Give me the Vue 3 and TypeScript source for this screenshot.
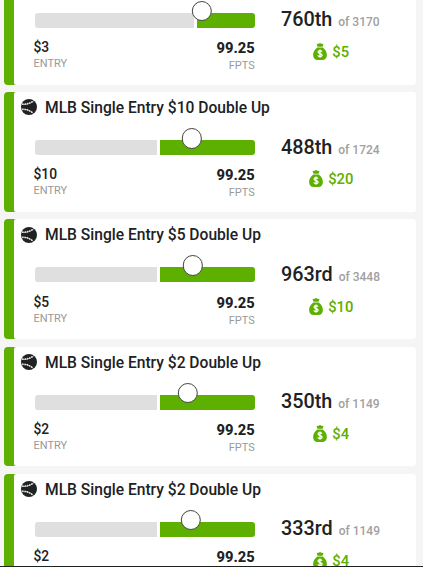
<script setup lang="ts">
interface Contest {
  title?: string
  entry: string
  points: string
  rank: string
  total: number
  prize: string
  split: number
  knob: number
}

// split and knob are pixel offsets along the 220px progress bar
const contests: Contest[] = [
  { entry: '$3', points: '99.25', rank: '760th', total: 3170, prize: '$5', split: 159.5, knob: 167.2 },
  { title: 'MLB Single Entry $10 Double Up', entry: '$10', points: '99.25', rank: '488th', total: 1724, prize: '$20', split: 122.7, knob: 157.6 },
  { title: 'MLB Single Entry $5 Double Up', entry: '$5', points: '99.25', rank: '963rd', total: 3448, prize: '$10', split: 122.7, knob: 158.6 },
  { title: 'MLB Single Entry $2 Double Up', entry: '$2', points: '99.25', rank: '350th', total: 1149, prize: '$4', split: 122.7, knob: 153 },
  { title: 'MLB Single Entry $2 Double Up', entry: '$2', points: '99.25', rank: '333rd', total: 1149, prize: '$4', split: 122.7, knob: 156.5 },
]
</script>

<template>
  <main class="screen">
    <div class="list">
      <article v-for="(c, i) in contests" :key="i" class="card">
        <div class="panel">
          <header class="head">
            <template v-if="c.title">
              <svg class="ball" viewBox="0 0 16 16">
                <circle cx="8" cy="8" r="8" fill="#202123" />
                <g fill="none" stroke="#fff">
                  <path d="M.8 5.3C5 5.8 9.5 4.7 12.8 1.8M.9 10.1c4-.1 8.5 1.2 11.5 4.3" stroke-width=".75" />
                  <path d="M1.5 5C5.5 5.3 9.5 4.2 12.2 2M1.4 10.4c4 0 8 1.2 10.4 3.8" stroke-width="1.8" stroke-dasharray=".8 1.5" />
                </g>
              </svg>
              <h2 class="title">{{ c.title }}</h2>
            </template>
          </header>
          <div class="body">
            <section class="progress">
              <div class="bar">
                <span class="below" :style="{ width: c.split + 'px' }"></span>
                <span class="above"></span>
                <span class="knob" :style="{ left: c.knob + 'px' }"></span>
              </div>
              <div class="stats">
                <div class="stat">
                  <span class="amount">{{ c.entry }}</span>
                  <span class="label">ENTRY</span>
                </div>
                <div class="stat right">
                  <span class="points">{{ c.points }}</span>
                  <span class="label low">FPTS</span>
                </div>
              </div>
            </section>
            <section class="result">
              <div class="place">
                <span class="rank">{{ c.rank }}</span>
                <span class="total">of {{ c.total }}</span>
              </div>
              <div class="prize">
                <svg class="bag" viewBox="0 0 14 17">
                  <path d="M3.6.8 5 1.1 7 .1l2 1 1.5-.3-.9 3H4.5zM4.4 4.6h5.3c2.5 1.7 4.2 4.5 4.2 7.3 0 3-1.9 5-4.7 5H4.8c-2.8 0-4.7-2-4.7-5 0-2.8 1.8-5.6 4.3-7.3z" fill="#5daf00" />
                  <path d="M9 8.7C8.6 8 7.9 7.7 7 7.7c-1.3 0-2 .6-2 1.4 0 2 4.1.9 4.1 3 0 .9-.8 1.5-2.1 1.5-1 0-1.9-.4-2.2-1.2M7 6.6v8.1" fill="none" stroke="#fff" stroke-width="1.25" />
                </svg>
                <span>{{ c.prize }}</span>
              </div>
            </section>
          </div>
        </div>
      </article>
    </div>
    <div class="edge"></div>
  </main>
</template>

<style>
body {
  background: #f5f5f5;
  overflow: hidden;
}
</style>

<style scoped>
.screen {
  display: flex;
  flex-direction: column;
  width: 423px;
  height: 567px;
  overflow: hidden;
  background: #f5f5f5;
  color: #202123;
  font-family: Roboto, "Liberation Sans", sans-serif;
}
.list {
  display: flex;
  flex: 1;
  min-height: 0;
  flex-direction: column;
  gap: 7.4px;
  margin-top: -35.3px;
  padding: 0 7px 0 4px;
  overflow: hidden;
}
.card {
  flex: none;
  box-sizing: border-box;
  height: 119.9px;
  padding-left: 10px;
  border-radius: 4px;
  background: linear-gradient(90deg, #5daf00 12px, #fff 12px);
}
.panel {
  height: 100%;
  border-radius: 2px 4px 4px 2px;
  background: #fff;
}
.head {
  display: flex;
  align-items: center;
  gap: 8px;
  height: 32px;
  padding-left: 7px;
}
.ball {
  flex: none;
  width: 16px;
  height: 16px;
  margin-top: -1px;
}
.title {
  margin: 0;
  font-size: 15.6px;
  font-weight: 500;
  line-height: 20px;
  white-space: nowrap;
}
.body {
  display: flex;
  padding-left: 20.5px;
}
.progress {
  flex: none;
  width: 220px;
  padding-top: 16px;
}
.bar {
  position: relative;
  display: flex;
  gap: 2.7px;
  height: 15px;
}
.below {
  flex: none;
  border-radius: 3px 0 0 3px;
  background: #dfdfdf;
}
.above {
  flex: 1;
  border-radius: 0 3px 3px 0;
  background: #5daf00;
}
.knob {
  position: absolute;
  top: -11.8px;
  box-sizing: border-box;
  width: 20.4px;
  height: 20.4px;
  border: 1.4px solid #444;
  border-radius: 50%;
  background: #fff;
  transform: translateX(-50%);
}
.stats {
  display: flex;
  justify-content: space-between;
  padding-top: 11.5px;
}
.stat {
  display: flex;
  flex-direction: column;
  margin-left: -1px;
}
.right {
  align-items: flex-end;
  margin-right: -.3px;
}
.amount {
  font-size: 13.8px;
  font-weight: 500;
  line-height: 17px;
}
.points {
  font-size: 14.7px;
  font-weight: 800;
  line-height: 18px;
}
.label {
  color: #999;
  font-size: 11px;
  line-height: 15px;
}
.low {
  padding-top: 1px;
}
.result {
  flex: none;
  width: 130px;
  padding: 10.6px 0 0 26.5px;
}
.place {
  display: flex;
  align-items: baseline;
  gap: 6px;
  line-height: 26px;
  white-space: nowrap;
}
.rank {
  font-size: 19.8px;
  font-weight: 500;
}
.total {
  color: #a0a0a0;
  font-size: 12px;
  font-weight: 500;
}
.prize {
  display: flex;
  align-items: center;
  justify-content: center;
  gap: 5.5px;
  width: 100px;
  height: 20px;
  margin-top: 6.7px;
  color: #5daf00;
  font-size: 14.8px;
  font-weight: 500;
}
.bag {
  flex: none;
  width: 14px;
  height: 17px;
  margin-top: -1px;
}
.edge {
  flex: none;
  height: 1px;
  background: #202123;
}
</style>
